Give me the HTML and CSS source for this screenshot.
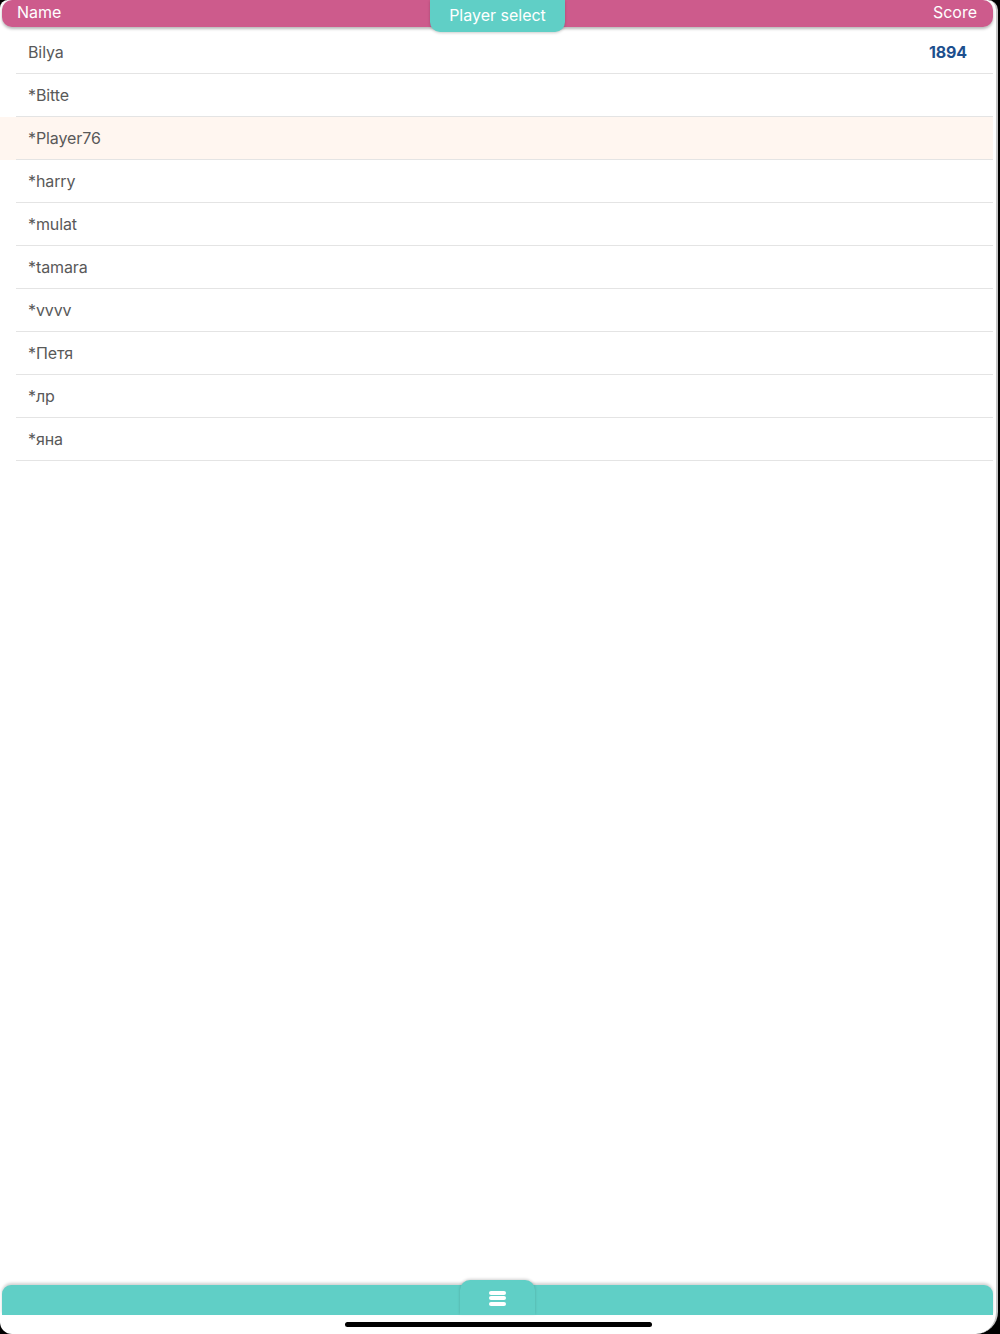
FILE: index.html
```html
<!DOCTYPE html>
<html lang="en">
<head>
<meta charset="utf-8">
<title>Player select</title>
<link rel="stylesheet" href="styles.css">
</head>
<body>
<div class="screen">
  <header class="topbar">
    <span class="col-name">Name</span>
    <span class="col-score">Score</span>
    <div class="title-tab">Player select</div>
  </header>
  <ul class="players">
    <li class="row"><span class="name">Bilya</span><span class="score">1894</span></li>
    <li class="row"><span class="name">*Bitte</span></li>
    <li class="row selected"><span class="name">*Player76</span></li>
    <li class="row"><span class="name">*harry</span></li>
    <li class="row"><span class="name">*mulat</span></li>
    <li class="row"><span class="name">*tamara</span></li>
    <li class="row"><span class="name">*vvvv</span></li>
    <li class="row"><span class="name">*Петя</span></li>
    <li class="row"><span class="name">*лр</span></li>
    <li class="row"><span class="name">*яна</span></li>
  </ul>
  <footer class="bottombar">
    <button class="menu-tab" aria-label="Menu">
      <span class="bars"><i></i><i></i><i></i></span>
    </button>
  </footer>
  <div class="home-area"><div class="home-indicator"></div></div>
</div>
</body>
</html>
```
FILE: styles.css
```css
html, body {
  margin: 0;
  padding: 0;
  background: #000;
}
body {
  width: 1000px;
  height: 1334px;
  overflow: hidden;
  font-family: Inter, "Liberation Sans", sans-serif;
}
.screen {
  width: 996px;
  height: 1334px;
  background: #fff;
  border-right: 2px solid #c4c4c4;
  border-radius: 8px 10px 22px 12px;
  display: flex;
  flex-direction: column;
  overflow: hidden;
}
.topbar {
  position: relative;
  box-sizing: border-box;
  height: 27px;
  margin: 0 3px 0 2px;
  background: #cd5b8c;
  border-radius: 10px;
  box-shadow: 0 2px 3px rgba(0, 0, 0, 0.28);
  display: flex;
  align-items: center;
  justify-content: space-between;
  padding: 0 16px 3px 15px;
  color: #fff;
  font-size: 16px;
  flex-shrink: 0;
  z-index: 2;
}
.title-tab {
  position: absolute;
  left: 428px;
  top: 0;
  width: 135px;
  height: 32px;
  background: #60cfc6;
  border-radius: 0 0 10px 10px;
  box-shadow: 0 1px 3px rgba(0, 0, 0, 0.2);
  display: flex;
  align-items: center;
  justify-content: center;
  padding-bottom: 2px;
  box-sizing: border-box;
  font-size: 16px;
  color: #fff;
}
.players {
  list-style: none;
  margin: 4px 3px 0 0;
  padding: 0;
  flex: 1;
}
.row {
  height: 42px;
  padding: 0 26px 1px 28px;
  display: flex;
  align-items: center;
  justify-content: space-between;
  background: linear-gradient(#e4e4e4, #e4e4e4) no-repeat 16px 100% / calc(100% - 16px) 1px;
  font-size: 16px;
  letter-spacing: -0.1px;
  color: #595959;
}
.row.selected {
  background-color: #fff6f0;
}
.score {
  font-weight: 700;
  color: #1d4f8e;
}
.bottombar {
  position: relative;
  height: 30px;
  margin: 0 3px 0 2px;
  background: #60cfc6;
  border-radius: 9px 9px 0 0;
  box-shadow: 0 -2px 3px rgba(0, 0, 0, 0.18);
  flex-shrink: 0;
  display: flex;
  justify-content: center;
}
.menu-tab {
  margin-top: -5px;
  width: 75px;
  height: 35px;
  border: 0;
  padding: 0;
  background: #60cfc6;
  border-radius: 10px 10px 0 0;
  box-shadow: 0 -1px 3px rgba(0, 0, 0, 0.18);
  display: flex;
  align-items: center;
  justify-content: center;
}
.bars {
  display: flex;
  flex-direction: column;
  gap: 1.5px;
  margin-top: 1px;
}
.bars i {
  display: block;
  width: 17px;
  height: 4px;
  border-radius: 2px;
  background: #fff;
}
.home-area {
  height: 19px;
  flex-shrink: 0;
  display: flex;
  justify-content: center;
  align-items: flex-start;
  padding-top: 7px;
  box-sizing: border-box;
}
.home-indicator {
  width: 307px;
  height: 5px;
  border-radius: 3px;
  background: #000;
}
```
